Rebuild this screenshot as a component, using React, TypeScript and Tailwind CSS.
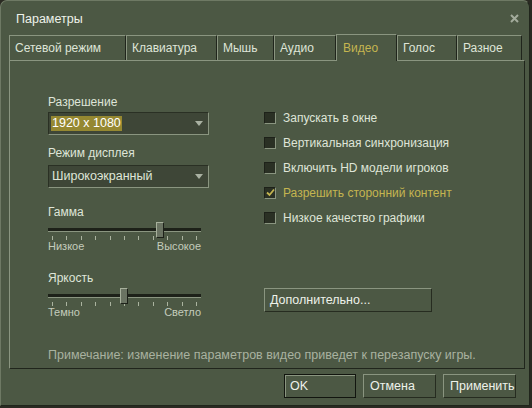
import * as React from 'react';

const tabs = [
  { label: 'Сетевой режим', w: 'w-[117px]' },
  { label: 'Клавиатура', w: 'w-[91px]' },
  { label: 'Мышь', w: 'w-[57px]' },
  { label: 'Аудио', w: 'w-[62px]' },
  { label: 'Видео', w: 'w-[61px]', active: true },
  { label: 'Голос', w: 'w-[60px]' },
  { label: 'Разное', w: 'w-[65px]' },
];

const options = [
  { label: 'Запускать в окне', checked: false },
  { label: 'Вертикальная синхронизация', checked: false },
  { label: 'Включить HD модели игроков', checked: false },
  { label: 'Разрешить сторонний контент', checked: true },
  { label: 'Низкое качество графики', checked: false },
];

function Combo({ value, selected }: { value: string; selected?: boolean }) {
  return (
    <div className="flex h-[23px] w-[161px] items-center justify-between border-t border-l border-[#2a3024] border-r border-b border-r-[#8a9580] border-b-[#8a9580] bg-[#3e4637] pl-[2px] pr-[5px]">
      <span
        className={
          selected
            ? 'bg-[#958831] px-[1px] text-[12.5px] leading-[15px] text-white'
            : 'px-[1px] text-[12.5px] leading-[15px] text-[#dfe5d8]'
        }
      >
        {value}
      </span>
      <svg width="8" height="5" viewBox="0 0 8 5">
        <path d="M0 0h8L4 5z" fill="#a9b1a2" />
      </svg>
    </div>
  );
}

function Slider({ label, value, low, high }: { label: string; value: number; low: string; high: string }) {
  return (
    <div className="flex flex-col">
      <div className="h-[16px] text-[12px] leading-[16px] text-[#dfe5d8]">{label}</div>
      <div className="relative mt-[2px] h-[16px] w-[153px]">
        <div className="absolute top-[6px] left-0 h-[4px] w-full border-b border-[#8a9580] bg-[#1d2119]" />
        <div
          className="absolute top-0 h-[16px] w-[8px] border-t border-l border-[#a7b09c] border-r border-b border-r-[#1d2119] border-b-[#1d2119] bg-[#6a7362]"
          style={{ left: Math.round(value * 144) }}
        />
      </div>
      <div className="-mt-[2px] flex h-[4px] w-[153px] justify-between px-[4px]">
        {Array.from({ length: 11 }).map((_, i) => (
          <div key={i} className="h-[4px] w-[1px] bg-[#aab39f]" />
        ))}
      </div>
      <div className="flex w-[153px] justify-between text-[11px] leading-[13px] text-[#c4ccbc]">
        <span>{low}</span>
        <span>{high}</span>
      </div>
    </div>
  );
}

function Check({ label, checked }: { label: string; checked: boolean }) {
  return (
    <div className="flex h-[25px] items-center">
      <div className="flex h-[12px] w-[12px] items-center justify-center border-t border-l border-[#1d2119] border-r border-b border-r-[#8a9580] border-b-[#8a9580] bg-[#2a3024]">
        {checked && (
          <svg width="9" height="9" viewBox="0 0 9 9">
            <path d="M1 4.5l2.5 2.5L8 1.5" stroke="#c4b550" strokeWidth="1.8" fill="none" />
          </svg>
        )}
      </div>
      <span className={checked ? 'ml-[7px] text-[12px] text-[#c4b550]' : 'ml-[7px] text-[12px] text-[#dfe5d8]'}>
        {label}
      </span>
    </div>
  );
}

function Button({ label, focused }: { label: string; focused?: boolean }) {
  return (
    <div
      className={
        focused
          ? 'flex h-[24px] w-[72px] items-center border border-[#12150f] bg-[#4c5844] px-[5px] text-[12.5px] text-[#eef2ea] shadow-[inset_1px_1px_0_#8a9580]'
          : 'flex h-[24px] w-[73px] items-center border-t border-l border-[#8a9580] border-r border-b border-r-[#262c20] border-b-[#262c20] bg-[#4c5844] px-[6px] text-[12.5px] text-[#eef2ea]'
      }
    >
      {label}
    </div>
  );
}

export default function App() {
  return (
    <div className="h-[408px] w-[532px] bg-[#2a2a22] font-['Liberation_Sans',Arial,sans-serif]">
      <div className="flex h-[406px] w-[530px] flex-col rounded-t-[7px] border-t border-l border-[#6e7964] border-r border-b border-r-[#20251c] border-b-[#20251c] bg-[#4c5844] pl-[8px]">
        {/* title */}
        <div className="flex h-[34px] items-start justify-between pr-[10px]">
          <span className="pl-[7px] pt-[10px] text-[12.5px] leading-[16px] text-[#eef2ea]">Параметры</span>
          <svg className="mt-[13px]" width="9" height="9" viewBox="0 0 9 9">
            <path d="M1 1l7 7M8 1L1 8" stroke="#a3ab9c" strokeWidth="2" />
          </svg>
        </div>

        {/* tabs */}
        <div className="relative z-10 flex h-[25px] items-end">
          {tabs.map((t) =>
            t.active ? (
              <div
                key={t.label}
                className={`${t.w} flex h-[27px] items-center border-t border-l border-[#8a9580] border-r border-r-[#20251c] bg-[#4c5844] pb-[1px] pl-[6px] text-[12px] text-[#c4b550] -mb-[1px]`}
              >
                {t.label}
              </div>
            ) : (
              <div
                key={t.label}
                className={`${t.w} flex h-[25px] items-center border-t border-l border-[#8a9580] border-r border-r-[#20251c] bg-[#4c5844] pl-[5px] text-[12px] text-[#dfe5d8]`}
              >
                {t.label}
              </div>
            )
          )}
        </div>

        {/* panel */}
        <div className="flex h-[309px] w-[516px] flex-col border-t border-l border-[#8a9580] border-r border-b border-r-[#20251c] border-b-[#20251c]">
          <div className="flex pl-[38px] pt-[33px]">
            <div className="flex w-[161px] flex-col">
              <div className="h-[16px] text-[12px] leading-[16px] text-[#dfe5d8]">Разрешение</div>
              <div className="mt-[2px]">
                <Combo value="1920 x 1080" selected />
              </div>
              <div className="mt-[10px] h-[16px] text-[12px] leading-[16px] text-[#dfe5d8]">Режим дисплея</div>
              <div className="mt-[4px]">
                <Combo value="Широкоэкранный" />
              </div>
              <div className="mt-[16px]">
                <Slider label="Гамма" value={0.75} low="Низкое" high="Высокое" />
              </div>
              <div className="mt-[17px]">
                <Slider label="Яркость" value={0.5} low="Темно" high="Светло" />
              </div>
            </div>
            <div className="ml-[55px] flex flex-col pt-[11px]">
              {options.map((o) => (
                <Check key={o.label} label={o.label} checked={o.checked} />
              ))}
              <div className="mt-[58px] flex h-[24px] w-[168px] items-center border-t border-l border-[#8a9580] border-r border-b border-r-[#262c20] border-b-[#262c20] px-[5px] text-[12.5px] text-[#eef2ea]">
                Дополнительно...
              </div>
            </div>
          </div>
          <div className="mt-auto pb-[5px] pl-[38px] text-[12.5px] leading-[16px] text-[#a9b2a0]">
            Примечание: изменение параметров видео приведет к перезапуску игры.
          </div>
        </div>

        {/* buttons */}
        <div className="mt-[5px] flex justify-end gap-[7px] pr-[13px]">
          <Button label="OK" focused />
          <Button label="Отмена" />
          <Button label="Применить" />
        </div>
      </div>
    </div>
  );
}
